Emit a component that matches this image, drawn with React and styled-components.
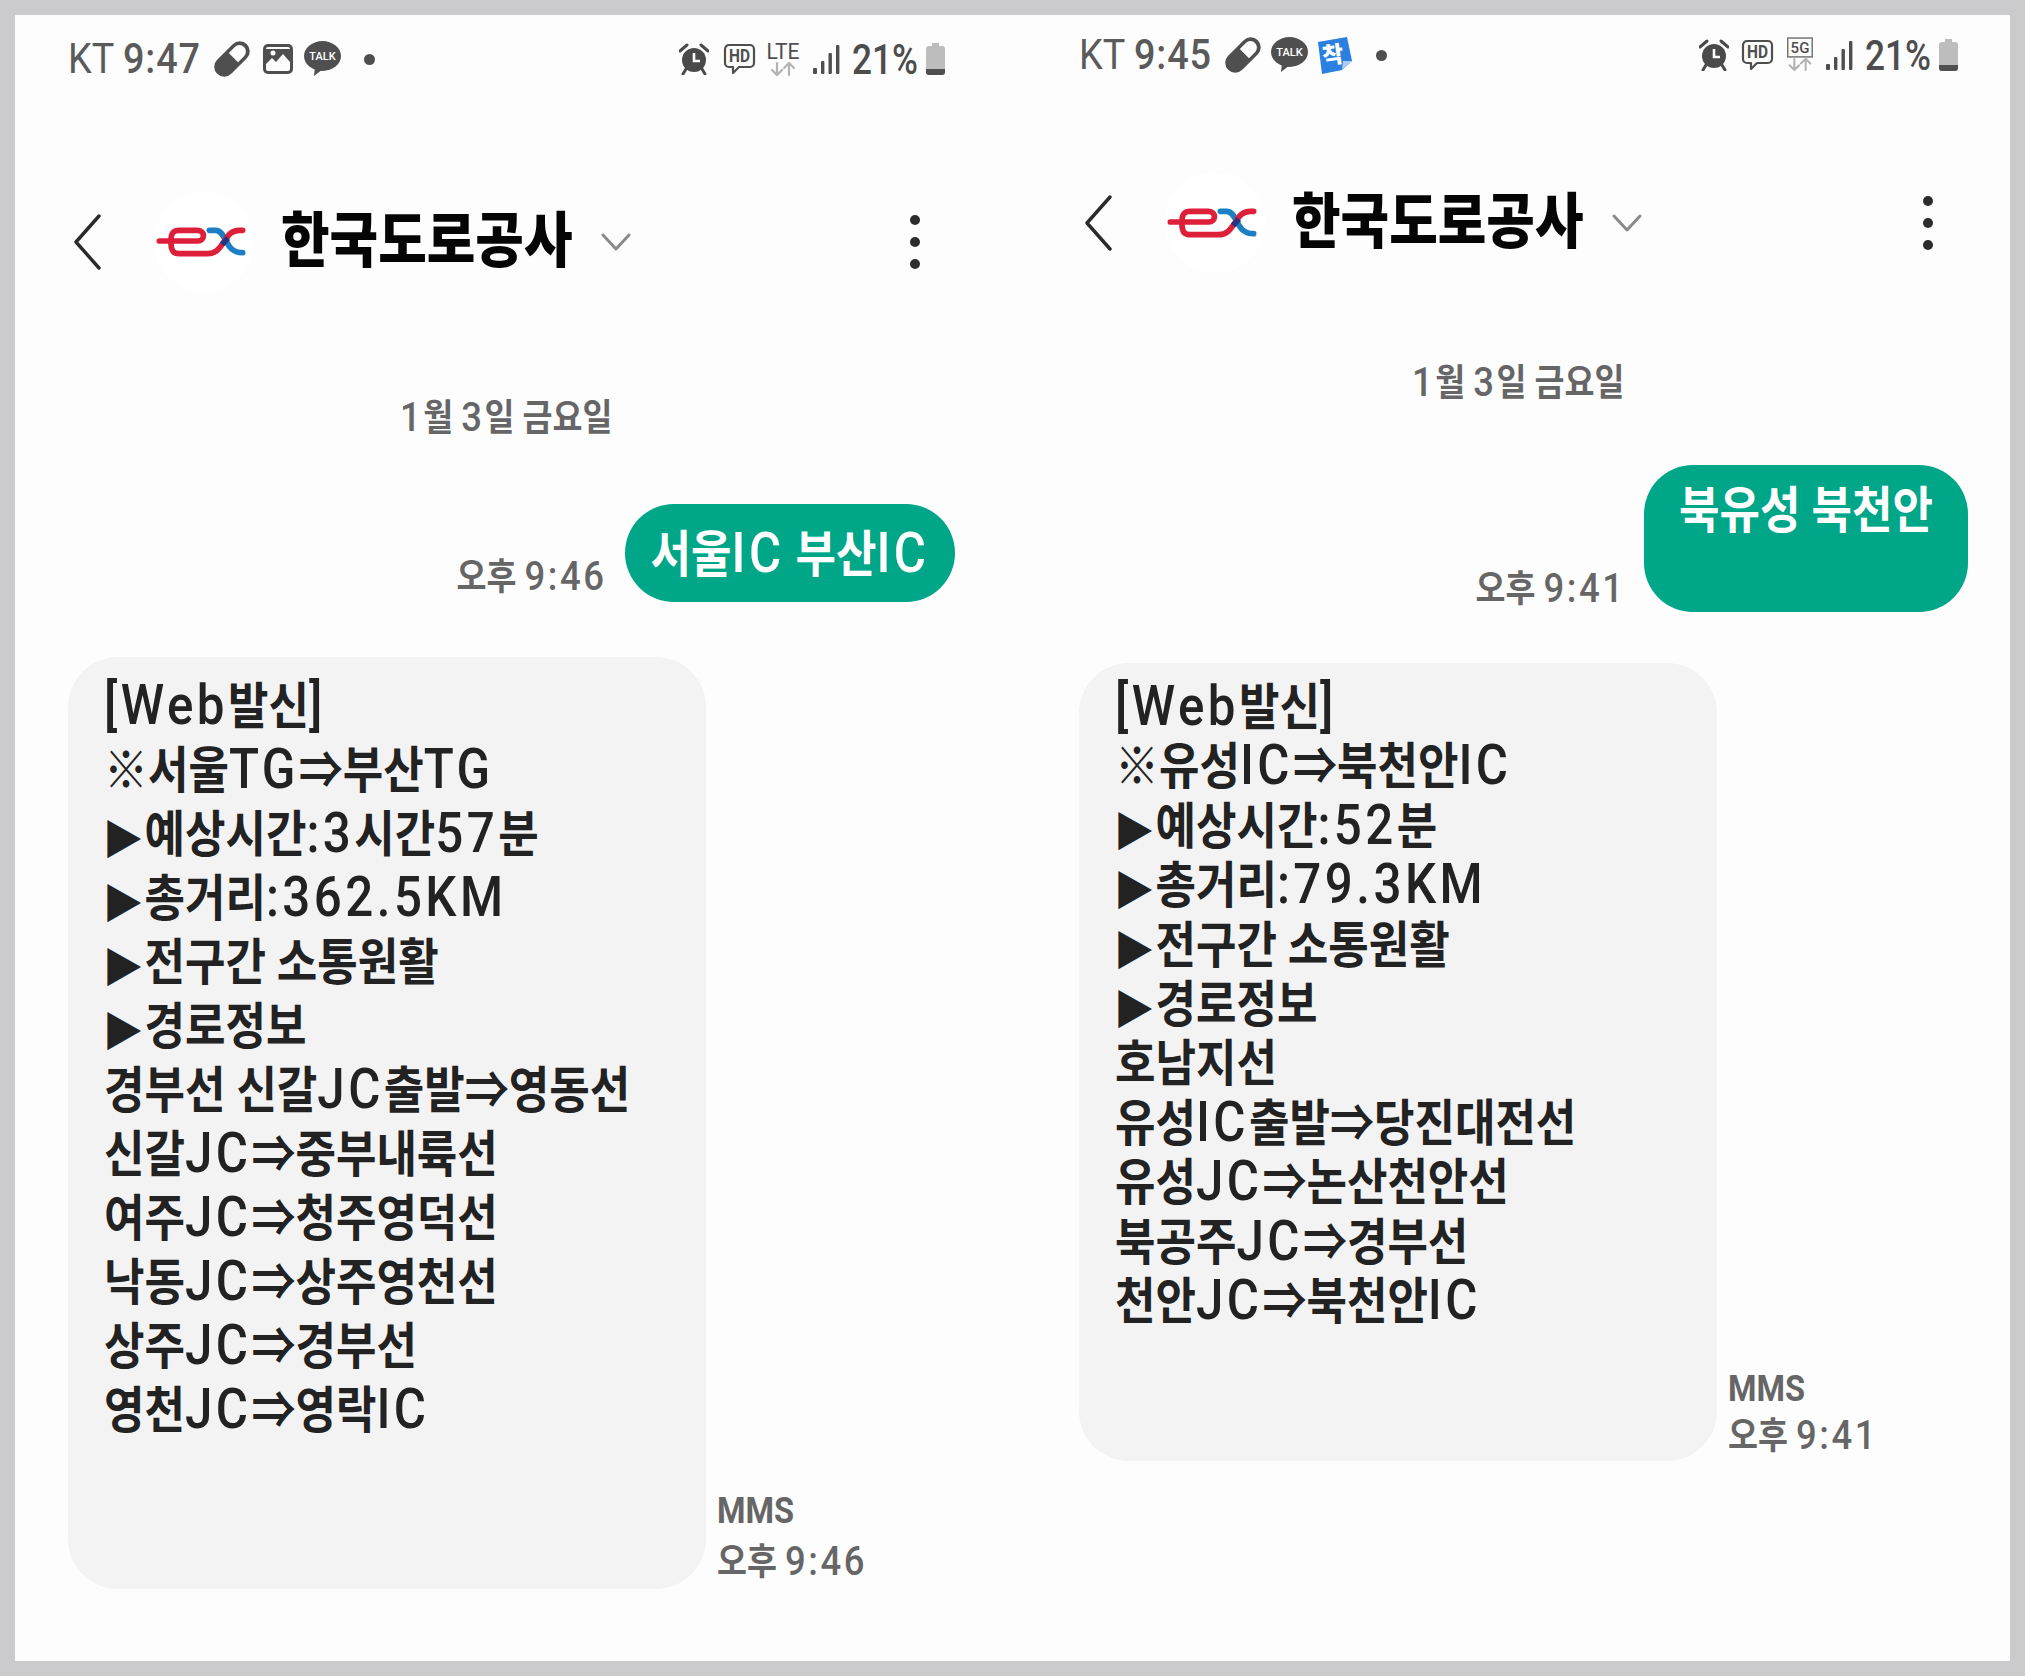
import React from 'react'
import styled, { createGlobalStyle, css } from 'styled-components'

const GlobalStyle = createGlobalStyle`
    html, body {
        margin: 0;
        padding: 0;
        background: #cbcbcd;
    }
    * {
        box-sizing: border-box;
    }
`

const fontStack = `Roboto, "Noto Sans CJK KR", sans-serif`

const condensed = css`
    display: block;
    white-space: nowrap;
    font-family: ${fontStack};
    transform: scaleX(${(p) => p.$sx || 0.88});
    transform-origin: ${(p) => p.$origin || 'left'} center;
`

const Frame = styled.div`
    width: 2025px;
    height: 1676px;
    padding: 15px;
    overflow: hidden;
`

const Panel = styled.div`
    width: 1995px;
    height: 1646px;
    background: #fdfdfe;
    display: grid;
    grid-template-columns: 995px 1000px;
`

const Screen = styled.section`
    display: flex;
    flex-direction: column;
    padding-left: ${(p) => p.$left}px;
    padding-right: ${(p) => p.$right}px;
    padding-top: ${(p) => p.$top}px;
`

const StatusBar = styled.div`
    height: 50px;
    display: flex;
    align-items: center;
    justify-content: space-between;
    padding-right: 10px;
`

const StatusGroup = styled.div`
    display: flex;
    align-items: center;
`

const Clock = styled.span`
    ${condensed}
    transform: scaleX(0.9);
    margin-right: -15px;
    font-size: 42px;
    line-height: 50px;
    color: #5a5a5a;
    font-weight: 400;
    b {
        font-weight: 500;
        letter-spacing: 1px;
    }
`

const Percent = styled.span`
    ${condensed}
    transform: scaleX(0.82);
    margin-left: 12px;
    margin-right: -14px;
    font-size: 43px;
    line-height: 50px;
    color: #4d4d4d;
    font-weight: 500;
`

const Icon = styled.svg`
    display: block;
    flex: none;
    margin-left: ${(p) => p.$ml || 0}px;
`

const Header = styled.header`
    height: 100px;
    margin-top: ${(p) => p.$mt}px;
    display: flex;
    align-items: center;
    padding-left: 5px;
`

const LogoCircle = styled.div`
    width: 100px;
    height: 100px;
    margin-left: 53px;
    padding-right: 6px;
    border-radius: 50%;
    background: #fff;
    display: flex;
    align-items: center;
    justify-content: center;
    flex: none;
`

const Title = styled.h1`
    ${condensed}
    width: 290px;
    margin: 0 0 0 27px;
    font-size: 60px;
    line-height: 100px;
    font-weight: 900;
    color: #050505;
`

const Dots = styled.div`
    margin-left: auto;
    margin-right: 35px;
    display: flex;
    flex-direction: column;
    gap: 12px;
    i {
        display: block;
        width: 10px;
        height: 10px;
        border-radius: 50%;
        background: #2c2c2c;
    }
`

const DateLabel = styled.div`
    ${condensed}
    margin-top: ${(p) => p.$mt}px;
    padding-right: 12px;
    text-align: center;
    font-size: 37px;
    line-height: 40px;
    font-weight: 700;
    color: #666;
    transform-origin: center;
`

const SentRow = styled.div`
    margin-top: ${(p) => p.$mt}px;
    display: flex;
    justify-content: flex-end;
    align-items: flex-end;
    gap: 19px;
`

const SentBubble = styled.div`
    width: ${(p) => p.$w}px;
    height: ${(p) => p.$h}px;
    padding-top: ${(p) => p.$pt}px;
    border-radius: 49px;
    background: #00a688;
    text-align: center;
`

const SentText = styled.span`
    ${condensed}
    transform-origin: center;
    font-size: 50px;
    line-height: 60px;
    font-weight: 700;
    color: #fff;
`

const Time = styled.span`
    ${condensed}
    font-size: 37px;
    line-height: ${(p) => p.$lh || 50}px;
    font-weight: 700;
    color: #666;
`

const SentTime = styled(Time)`
    transform-origin: right center;
    margin-bottom: ${(p) => p.$mb}px;
`

const ReceivedRow = styled.div`
    margin-top: ${(p) => p.$mt}px;
    display: flex;
    align-items: flex-end;
`

const ReceivedBubble = styled.div`
    width: 638px;
    flex: none;
    padding: ${(p) => p.$pt}px 0 ${(p) => p.$pb}px 36px;
    border-radius: 50px;
    background: #f3f3f3;
`

const Line = styled.div`
    ${condensed}
    font-size: 50px;
    line-height: ${(p) => p.$lh}px;
    font-weight: 700;
    color: #222;
`

const Latin = styled.span`
    font-size: 1.12em;
    letter-spacing: 0.07em;
    line-height: 0;
    font-weight: 500;
`

const Triangle = styled.span`
    display: inline-block;
    width: 46px;
    text-align: center;
    font-family: "DejaVu Sans", sans-serif;
`

const Meta = styled.div`
    margin-left: 11px;
`

const renderRuns = (text) =>
    text.split(/(▶|[A-Za-z0-9:.[\]]+)/).map((run, i) => {
        if (run === '▶') return <Triangle key={i}>▶</Triangle>
        if (/^[A-Za-z0-9:.[\]]+$/.test(run)) return <Latin key={i}>{run}</Latin>
        return run
    })

const Chevron = ({ w = 28, h = 56 }) => (
    <Icon width={w} height={h} viewBox="0 0 28 56" fill="none">
        <path d="M26 2 L3 28 L26 54" stroke="#2a2a2a" strokeWidth="3.4" strokeLinecap="round" strokeLinejoin="round" />
    </Icon>
)

const Caret = () => (
    <Icon $ml={30} width={30} height={20} viewBox="0 0 30 20" fill="none">
        <path d="M2 3 L15 17 L28 3" stroke="#8a8a8a" strokeWidth="3" strokeLinecap="round" strokeLinejoin="round" />
    </Icon>
)

const ExLogo = () => (
    <svg width="90" height="36" viewBox="80 140 270 100" fill="none">
        <path d="M240 155 H258 C275 155 283 172 290 187 C300 205 310 222 340 222" stroke="#1c7fc4" strokeWidth="17" strokeLinecap="round" />
        <path d="M90 187 H205 C228 187 228 155 205 155 H150 C130 155 125 165 125 185 V195 C125 215 132 225 150 225 H235 C265 225 275 200 285 188 C295 172 305 155 330 155 H340" stroke="#de1f3a" strokeWidth="17" strokeLinecap="round" />
        <path d="M278 197 L296 178" stroke="#28347f" strokeWidth="17" />
    </svg>
)

const Pill = ({ ml }) => (
    <Icon $ml={ml} width={36} height={36} viewBox="0 0 36 36">
        <g transform="rotate(-45 18 18)">
            <rect x="-3" y="8" width="42" height="20" rx="10" fill="#4f4f4f" />
            <path d="M20 11.5 H28.5 A6.5 6.5 0 0 1 28.5 24.5 H20 Z" fill="#fdfdfe" />
        </g>
    </Icon>
)

const ImageIcon = ({ ml }) => (
    <Icon $ml={ml} width={30} height={30} viewBox="0 0 30 30">
        <rect x="0" y="0" width="30" height="30" rx="5" fill="#4f4f4f" />
        <rect x="3" y="3" width="24" height="24" rx="2" fill="#fdfdfe" />
        <path d="M3 5 H27 V18 L20 10 L13 18 L9 14 L3 20 Z" fill="#4f4f4f" />
        <circle cx="10" cy="9" r="2.5" fill="#fdfdfe" />
    </Icon>
)

const TalkIcon = ({ ml }) => (
    <Icon $ml={ml} width={37} height={36} viewBox="0 0 37 36">
        <ellipse cx="18.5" cy="15" rx="18.5" ry="15" fill="#4f4f4f" />
        <path d="M11 26 L10 35 L19 28 Z" fill="#4f4f4f" />
        <text x="18.5" y="19" textAnchor="middle" fontFamily="Roboto, sans-serif" fontSize="11" fontWeight="500" fill="#fff">TALK</text>
    </Icon>
)

const ArriveIcon = ({ ml }) => (
    <Icon $ml={ml} width={37} height={37} viewBox="0 0 37 37">
        <path d="M3 5 L32 0 L37 24 L27 33 L7 37 Z" fill="#2a7fe0" />
        <path d="M37 24 L28 24 L27 33 Z" fill="#a9cdf4" />
        <text x="18" y="26" textAnchor="middle" fontFamily={'"Noto Sans CJK KR", sans-serif'} fontSize="23" fontWeight="900" fill="#fff" transform="rotate(-8 18 18)">착</text>
    </Icon>
)

const Dot = ({ ml }) => (
    <Icon $ml={ml} width={11} height={11} viewBox="0 0 11 11">
        <circle cx="5.5" cy="5.5" r="5.5" fill="#4f4f4f" />
    </Icon>
)

const AlarmIcon = () => (
    <Icon width={30} height={32} viewBox="0 0 30 32">
        <path d="M1 8 L8 2 M29 8 L22 2" stroke="#4a4a4a" strokeWidth="3" strokeLinecap="round" />
        <path d="M7 26 L4 31 M23 26 L26 31" stroke="#4a4a4a" strokeWidth="3" strokeLinecap="round" />
        <circle cx="15" cy="17" r="12" fill="#4a4a4a" />
        <path d="M15 10 V18 H21" stroke="#fdfdfe" strokeWidth="2.6" fill="none" />
    </Icon>
)

const HdIcon = ({ ml }) => (
    <Icon $ml={ml} width={33} height={32} viewBox="0 0 33 32" fill="none">
        <path d="M6 2 H27 A4 4 0 0 1 31 6 V20 A4 4 0 0 1 27 24 H16 L10 30 V24 H6 A4 4 0 0 1 2 20 V6 A4 4 0 0 1 6 2 Z" stroke="#4f4f4f" strokeWidth="2.2" strokeLinejoin="round" />
        <text x="16.5" y="19" textAnchor="middle" textLength="21" lengthAdjust="spacingAndGlyphs" fontFamily="Roboto, sans-serif" fontSize="19" fontWeight="700" fill="#4f4f4f">HD</text>
    </Icon>
)

const DataArrows = () => (
    <g stroke="#b3b3b3" strokeWidth="2.2" fill="none" strokeLinecap="round" strokeLinejoin="round">
        <path d="M11 23 V35 M6 30 L11 35 L16 30" />
        <path d="M23 35 V23 M18 28 L23 23 L28 28" />
    </g>
)

const LteIcon = ({ ml }) => (
    <Icon $ml={ml} width={34} height={38} viewBox="0 0 34 38">
        <text x="17" y="19" textAnchor="middle" textLength="33" lengthAdjust="spacingAndGlyphs" fontFamily="Roboto, sans-serif" fontSize="22" fontWeight="400" fill="#4f4f4f">LTE</text>
        <DataArrows />
    </Icon>
)

const FiveGIcon = ({ ml }) => (
    <Icon $ml={ml} width={32} height={38} viewBox="0 0 34 38">
        <rect x="4" y="1" width="26" height="20" fill="none" stroke="#777" strokeWidth="1.6" />
        <text x="17" y="17" textAnchor="middle" fontFamily="Roboto, sans-serif" fontSize="16" fontWeight="500" fill="#4f4f4f">5G</text>
        <DataArrows />
    </Icon>
)

const SignalIcon = ({ ml }) => (
    <Icon $ml={ml} width={27} height={30} viewBox="0 0 27 30">
        <rect x="0" y="24" width="4" height="6" rx="1" fill="#4f4f4f" />
        <rect x="8" y="17" width="3.4" height="13" rx="1" fill="#4f4f4f" />
        <rect x="15.5" y="9" width="3.4" height="21" rx="1" fill="#4f4f4f" />
        <rect x="23" y="1" width="3.4" height="29" rx="1" fill="#4f4f4f" />
    </Icon>
)

const BatteryIcon = ({ ml }) => (
    <Icon $ml={ml} width={19} height={32} viewBox="0 0 19 32">
        <path d="M6 0 H13 V3 H16 A3 3 0 0 1 19 6 V29 A3 3 0 0 1 16 32 H3 A3 3 0 0 1 0 29 V6 A3 3 0 0 1 3 3 H6 Z" fill="#bdbdbd" />
        <path d="M0 26 H19 V29 A3 3 0 0 1 16 32 H3 A3 3 0 0 1 0 29 Z" fill="#4f4f4f" />
    </Icon>
)

const leftLines = [
    '[Web발신]',
    '※서울TG⇒부산TG',
    '▶예상시간:3시간57분',
    '▶총거리:362.5KM',
    '▶전구간 소통원활',
    '▶경로정보',
    '경부선 신갈JC출발⇒영동선',
    '신갈JC⇒중부내륙선',
    '여주JC⇒청주영덕선',
    '낙동JC⇒상주영천선',
    '상주JC⇒경부선',
    '영천JC⇒영락IC',
]

const rightLines = [
    '[Web발신]',
    '※유성IC⇒북천안IC',
    '▶예상시간:52분',
    '▶총거리:79.3KM',
    '▶전구간 소통원활',
    '▶경로정보',
    '호남지선',
    '유성IC출발⇒당진대전선',
    '유성JC⇒논산천안선',
    '북공주JC⇒경부선',
    '천안JC⇒북천안IC',
]

const ConversationHeader = ({ mt }) => (
    <Header $mt={mt}>
        <Chevron />
        <LogoCircle>
            <ExLogo />
        </LogoCircle>
        <Title>한국도로공사</Title>
        <Caret />
        <Dots>
            <i />
            <i />
            <i />
        </Dots>
    </Header>
)

function App() {
    return (
        <>
            <GlobalStyle />
            <Frame>
                <Panel>
                    <Screen $left={53} $right={55} $top={19}>
                        <StatusBar>
                            <StatusGroup>
                                <Clock>KT <b>9:47</b></Clock>
                                <Pill ml={13} />
                                <ImageIcon ml={13} />
                                <TalkIcon ml={11} />
                                <Dot ml={23} />
                            </StatusGroup>
                            <StatusGroup>
                                <AlarmIcon />
                                <HdIcon ml={14} />
                                <LteIcon ml={10} />
                                <SignalIcon ml={13} />
                                <Percent>21%</Percent>
                                <BatteryIcon ml={7} />
                            </StatusGroup>
                        </StatusBar>
                        <ConversationHeader mt={108} />
                        <DateLabel $mt={107}>{renderRuns('1월 3일 금요일')}</DateLabel>
                        <SentRow $mt={65}>
                            <SentTime $mb={-1}>{renderRuns('오후 9:46')}</SentTime>
                            <SentBubble $w={330} $h={98} $pt={21}>
                                <SentText>{renderRuns('서울IC 부산IC')}</SentText>
                            </SentBubble>
                        </SentRow>
                        <ReceivedRow $mt={55}>
                            <ReceivedBubble $pt={18} $pb={146}>
                                {leftLines.map((line, i) => (
                                    <Line key={i} $lh={64}>{renderRuns(line)}</Line>
                                ))}
                            </ReceivedBubble>
                            <Meta>
                                <Time $lh={52}>MMS</Time>
                                <Time $lh={52}>{renderRuns('오후 9:46')}</Time>
                            </Meta>
                        </ReceivedRow>
                    </Screen>

                    <Screen $left={69} $right={42} $top={15}>
                        <StatusBar>
                            <StatusGroup>
                                <Clock>KT <b>9:45</b></Clock>
                                <Pill ml={13} />
                                <TalkIcon ml={10} />
                                <ArriveIcon ml={7} />
                                <Dot ml={24} />
                            </StatusGroup>
                            <StatusGroup>
                                <AlarmIcon />
                                <HdIcon ml={12} />
                                <FiveGIcon ml={10} />
                                <SignalIcon ml={10} />
                                <Percent>21%</Percent>
                                <BatteryIcon ml={7} />
                            </StatusGroup>
                        </StatusBar>
                        <ConversationHeader mt={93} />
                        <DateLabel $mt={91}>{renderRuns('1월 3일 금요일')}</DateLabel>
                        <SentRow $mt={61}>
                            <SentTime $mb={-3}>{renderRuns('오후 9:41')}</SentTime>
                            <SentBubble $w={324} $h={147} $pt={16}>
                                <SentText>북유성 북천안</SentText>
                            </SentBubble>
                        </SentRow>
                        <ReceivedRow $mt={51}>
                            <ReceivedBubble $pt={16} $pb={129}>
                                {rightLines.map((line, i) => (
                                    <Line key={i} $lh={59.4}>{renderRuns(line)}</Line>
                                ))}
                            </ReceivedBubble>
                            <Meta>
                                <Time $lh={48}>MMS</Time>
                                <Time $lh={48}>{renderRuns('오후 9:41')}</Time>
                            </Meta>
                        </ReceivedRow>
                    </Screen>
                </Panel>
            </Frame>
        </>
    )
}

export default App
